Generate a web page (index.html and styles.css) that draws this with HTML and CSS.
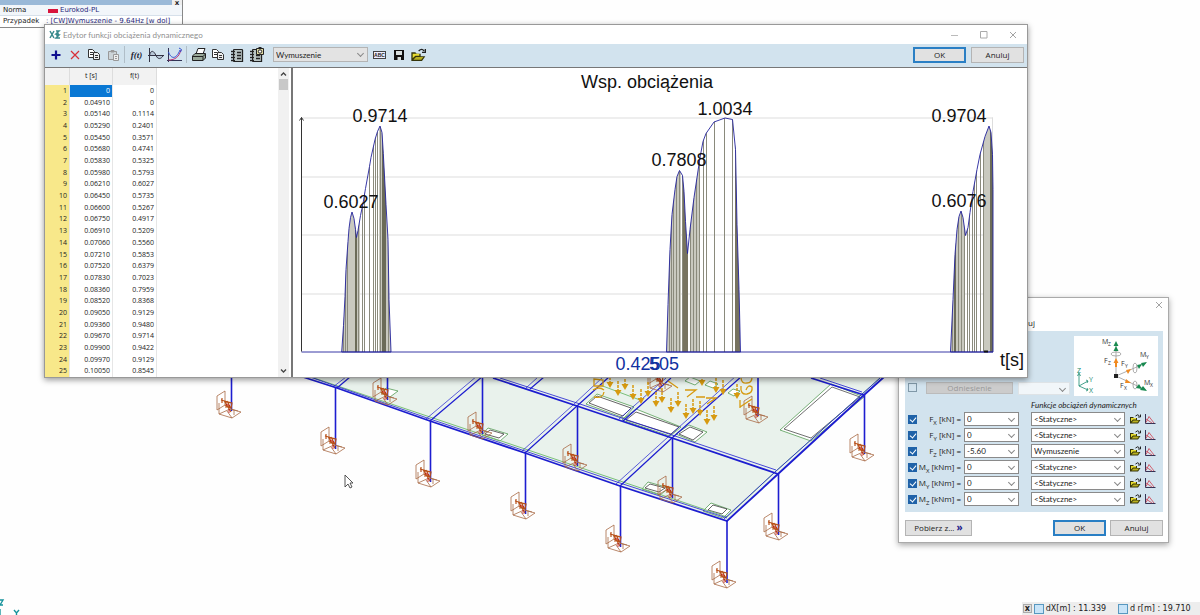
FILE: index.html
```html
<!DOCTYPE html>
<html lang="pl">
<head>
<meta charset="utf-8">
<title>Edytor funkcji obciążenia dynamicznego</title>
<link rel="stylesheet" href="styles.css">
</head>
<body>
<main class="desktop">
<svg class="scene" viewBox="0 0 1200 615" preserveAspectRatio="xMinYMin meet" aria-hidden="true">
  <defs>
    <g id="support" fill="none" stroke="#a86a45" stroke-width="0.8">
      <path d="M-14 -22 L-6 -27 V-13 L-14 -8 Z M-12 -15 V-4 L1 0 L10 -6 L-1 -9 L-12 -4 M1 0 L-4 -7 M3 -8 V-3 M0 -9 L7 -7"/>
      <path stroke="#b85018" stroke-width="1.2" d="M-10 -18 L1 -15 M-9 -20 V-15 M-6 -13 L0 -10 L1 -15 L-6 -16 L0 -6 M-4 -17 L-1 -11 L-6 -11"/>
      <path stroke="#c01010" stroke-width="0.8" d="M-5 -14 L-1 -12 M-2 -9 V-5"/>
    </g>
    <g id="arrow"><path fill="none" stroke="#d79a10" stroke-width="1.5" stroke-dasharray="3 1" d="M0 -11 V0"/><path fill="#d79a10" d="M-3.500 -2 H3.500 L0 4 Z"/></g>
  </defs>
  <path fill="#e9f2ec" d="M300 376 L430 421 L525 453 L620 486 L727 521 L778 474 L864 395 L886 376 Z"/>
  <g fill="#fff" stroke="#3f8f3f" stroke-width="0.7">
    <path d="M780 430 L811 441 L864 397 L831 384 Z"/><path stroke="#333" d="M784 429 L811 438 L860 397 L832 387 Z"/>
    <path d="M586 404 L597 394 L634 407 L624 418 Z"/><path stroke="#222" d="M589 403 L597 396 L631 408 L623 416 Z"/>
    <path d="M622 420 L636 409 L681 427 L670 436 Z"/><path stroke="#222" d="M626 420 L636 412 L679 427 L671 434 Z"/>
    <path d="M676 434 L689 425 L707 432 L695 442 Z"/><path stroke="#222" d="M679 434 L690 427 L703 432 L693 440 Z"/>
    <path d="M703 511 L711 503 L731 510 L723 518 Z"/><path stroke="#222" d="M708 510 L713 505 L727 509 L722 514 Z"/>
    <path d="M482 435 L488 428 L508 434 L500 441 Z"/><path stroke="#222" d="M485 434 L490 430 L504 434 L499 438 Z"/>
    <path d="M642 489 L648 482 L669 488 L660 495 Z"/><path stroke="#222" d="M645 488 L650 484 L665 488 L659 492 Z"/>
    <path d="M685 381 L690 377 L700 381 L695 385 Z M705 385 L710 381 L718 384 L713 388 Z M728 393 L733 389 L740 391 L734 396 Z M381 393 L386 388 L398 391 L390 397 Z"/>
  </g>
  <path fill="none" stroke="#6db96d" stroke-width="0.9" d="M314 378 L430 417 L727 517 L776 471 L880 378 M600 385 L640 400"/>
  <g fill="none" stroke="#1d1dd0">
    <path stroke-width="1.8" d="M303 377 L337 388 L430 421 L525 453 L620 486 L727 521 L778 474 L864 395 L884 377 M493 378 L577 406 L672 438 L778 474 M811 378 L864 395"/>
    <path stroke-width="0.8" d="M310 377 L430 419 L620 483 L727 518 M500 378 L577 403 L672 435 L776 470 M820 378 L862 392 M724 519 L775 472 L880 378"/>
    <path stroke-width="1.2" d="M337 388 L350 377 M430 421 L483 376 M525 453 L577 406 L609 377 M620 486 L672 438 L742 376 M530 389 L544 377 M623 421 L671 378"/>
    <path stroke-width="0.7" d="M333 387 L346 377 M426 419 L477 376 M521 452 L573 405 L603 377 M616 484 L668 437 L736 376 M526 388 L538 377 M619 419 L666 378"/>
    <path stroke-width="1.6" d="M231.500 377 V411 M335.500 388 V449 M387.500 377 V400 M430.500 421 V482 M482.500 377 V434 M525.500 453 V514 M577.500 406 V466 M620.500 486 V547 M672.500 438 V498 M727 521 V583 M758 377 V416 M778.500 474 V535 M864.500 395 V454"/>
  </g>
  <g>
    <use href="#support" x="231" y="418"/><use href="#support" x="335" y="454"/><use href="#support" x="387" y="405"/><use href="#support" x="430" y="487"/><use href="#support" x="482" y="439"/><use href="#support" x="525" y="519"/><use href="#support" x="577" y="471"/><use href="#support" x="620" y="552"/><use href="#support" x="672" y="503"/><use href="#support" x="726" y="588"/><use href="#support" x="758" y="423"/><use href="#support" x="778" y="540"/><use href="#support" x="864" y="461"/><use href="#support" x="662" y="392"/>
  </g>
  <g>
    <use href="#arrow" x="610" y="384"/><use href="#arrow" x="618" y="392"/><use href="#arrow" x="625" y="386"/><use href="#arrow" x="633" y="396"/><use href="#arrow" x="641" y="400"/><use href="#arrow" x="648" y="393"/><use href="#arrow" x="656" y="403"/><use href="#arrow" x="662" y="399"/><use href="#arrow" x="671" y="409"/><use href="#arrow" x="678" y="403"/><use href="#arrow" x="686" y="415"/><use href="#arrow" x="693" y="410"/><use href="#arrow" x="700" y="412"/><use href="#arrow" x="707" y="421"/><use href="#arrow" x="714" y="417"/><use href="#arrow" x="716" y="389"/><use href="#arrow" x="723" y="391"/><use href="#arrow" x="702" y="382"/><use href="#arrow" x="737" y="395"/>
    <path fill="none" stroke="#d79a10" stroke-width="1.3" d="M685 390 H696 L687 397 M696 397 H705 M706 398 H716 L707 404 M593 390 Q599 386 604 390 M594 397 Q603 399 604 392 M594 379 V386 H603 V380 Z M740 407 L752 399 M740 400 V408 M741 386 Q740 395 747 394 Q753 393 752 387 Q748 384 746 390 M741 377 Q741 384 747 383 Q752 383 752 377 M668 381 L678 388"/>
  </g>
  <path fill="#fff" stroke="#444" stroke-width="0.9" d="M345 475 V487 L348 484 L350 488 L352 487 L350 483 H353 Z"/>
  <path fill="none" stroke="#16939c" stroke-width="1.4" d="M0 600 H3 L0 605 H3 M0 609 V615 M14 610 L16.500 613 L19 610 M16.500 613 V615"/>
</svg>

<aside class="info">
  <div class="info-head"><button class="info-close" aria-label="Zamknij">x</button></div>
  <dl class="info-list">
    <div class="info-row"><dt>Norma</dt><dd><i class="flag"></i>Eurokod-PL</dd></div>
    <div class="info-row"><dt>Przypadek</dt><dd>: [CW]Wymuszenie - 9.64Hz [w dol]</dd></div>
  </dl>
</aside>

<section class="loads">
  <header class="loads-title"><button class="ghost" aria-label="Zamknij"><svg width="8" height="8" viewBox="0 0 8 8"><path d="M1 1 L7 7 M7 1 L1 7" stroke="#999" stroke-width="0.900" fill="none"/></svg></button></header>
  <div class="loads-tab">uj</div>
  <div class="loads-panel">
    <div class="ref-row">
      <input type="checkbox" class="tick" aria-label="Odniesienie">
      <button class="btn ref-btn" disabled>Odniesienie</button>
      <span class="combo muted"><select aria-label="Układ odniesienia" disabled><option></option></select></span>
      <svg class="axes" viewBox="0 0 84 60" aria-hidden="true">
        <rect width="84" height="60" fill="#fff"/>
        <g stroke="#999" fill="none" stroke-width="0.8"><path d="M42 40 V8 M42 40 L72 27 M42 40 L72 54"/><ellipse cx="42" cy="18" rx="5" ry="2"/><ellipse cx="61" cy="32" rx="2" ry="5"/><ellipse cx="61" cy="49" rx="2" ry="4"/></g>
        <g fill="#188a50"><path d="M39.500 10 L42 5 L44.500 10 Z M39.500 15 L42 10 L44.500 15 Z M67 27 L73 26 L69 31 Z M63 29 L68 28 L65 33 Z M66 54 L73 55 L69 50 Z M62 52 L68 53 L65 48 Z"/></g>
        <g fill="#f08a20"><path d="M39.500 27 L42 22 L44.500 27 Z M41 26 H43 V31 H41 Z M52 34 L57 33 L54 38 Z M52 43 L57 47 L51 47 Z"/></g>
        <rect x="40" y="38" width="4" height="4" fill="#222"/>
        <path d="M5 50 V38 M5 50 L14 45 M5 50 L14 54 M3.500 40 L5 37 L6.500 40 M12 44 L14 45 L13 47 M12 55 L14 54 L13 52" stroke="#188a70" fill="none" stroke-width="0.8"/>
        <g class="axes-text"><text x="28" y="8">M</text><text x="34" y="10">Z</text><text x="30" y="27">F</text><text x="34" y="29">Z</text><text x="47" y="30">F</text><text x="51" y="32">Y</text><text x="46" y="52">F</text><text x="50" y="54">X</text><text x="66" y="21">M</text><text x="72" y="23">Y</text><text x="70" y="49">M</text><text x="76" y="51">X</text></g>
        <g class="axes-world"><text x="3" y="37">Z</text><text x="15" y="46">Y</text><text x="15" y="57">X</text></g>
      </svg>
    </div>
    <p class="loads-caption">Funkcje obciążeń dynamicznych</p>
    <div class="load-grid">
      <div class="load-row"><input type="checkbox" class="tick" id="fx" checked><label for="fx">F<sub>X</sub> [kN] =</label><span class="combo"><select aria-label="Wartość FX"><option>0</option></select></span><span class="combo fn"><select aria-label="Funkcja FX"><option>&lt;Statyczne&gt;</option></select></span><button class="mini" aria-label="Otwórz"><svg><use href="#i-open"/></svg></button><button class="mini" aria-label="Wykres"><svg><use href="#i-graph"/></svg></button></div>
      <div class="load-row"><input type="checkbox" class="tick" id="fy" checked><label for="fy">F<sub>Y</sub> [kN] =</label><span class="combo"><select aria-label="Wartość FY"><option>0</option></select></span><span class="combo fn"><select aria-label="Funkcja FY"><option>&lt;Statyczne&gt;</option></select></span><button class="mini" aria-label="Otwórz"><svg><use href="#i-open"/></svg></button><button class="mini" aria-label="Wykres"><svg><use href="#i-graph"/></svg></button></div>
      <div class="load-row"><input type="checkbox" class="tick" id="fz" checked><label for="fz">F<sub>Z</sub> [kN] =</label><span class="combo"><select aria-label="Wartość FZ"><option>-5.60</option></select></span><span class="combo fn"><select aria-label="Funkcja FZ"><option>Wymuszenie</option></select></span><button class="mini" aria-label="Otwórz"><svg><use href="#i-open"/></svg></button><button class="mini" aria-label="Wykres"><svg><use href="#i-graph"/></svg></button></div>
      <div class="load-row"><input type="checkbox" class="tick" id="mx" checked><label for="mx">M<sub>X</sub> [kNm] =</label><span class="combo"><select aria-label="Wartość MX"><option>0</option></select></span><span class="combo fn"><select aria-label="Funkcja MX"><option>&lt;Statyczne&gt;</option></select></span><button class="mini" aria-label="Otwórz"><svg><use href="#i-open"/></svg></button><button class="mini" aria-label="Wykres"><svg><use href="#i-graph"/></svg></button></div>
      <div class="load-row"><input type="checkbox" class="tick" id="my" checked><label for="my">M<sub>Y</sub> [kNm] =</label><span class="combo"><select aria-label="Wartość MY"><option>0</option></select></span><span class="combo fn"><select aria-label="Funkcja MY"><option>&lt;Statyczne&gt;</option></select></span><button class="mini" aria-label="Otwórz"><svg><use href="#i-open"/></svg></button><button class="mini" aria-label="Wykres"><svg><use href="#i-graph"/></svg></button></div>
      <div class="load-row"><input type="checkbox" class="tick" id="mz" checked><label for="mz">M<sub>Z</sub> [kNm] =</label><span class="combo"><select aria-label="Wartość MZ"><option>0</option></select></span><span class="combo fn"><select aria-label="Funkcja MZ"><option>&lt;Statyczne&gt;</option></select></span><button class="mini" aria-label="Otwórz"><svg><use href="#i-open"/></svg></button><button class="mini" aria-label="Wykres"><svg><use href="#i-graph"/></svg></button></div>
    </div>
  </div>
  <footer class="loads-foot"><button class="btn wide">Pobierz z... <b>»</b></button><span class="grow"></span><button class="btn primary">OK</button><button class="btn">Anuluj</button></footer>
</section>

<section class="editor">
  <header class="titlebar">
    <svg width="12" height="10" viewBox="0 0 12 10" aria-hidden="true"><path d="M1 1 L5 8 M5 1 L1 8 M7 1 H10 L7 4 H10 M7 5 H10 L7 8 H11" stroke="#37898c" stroke-width="1.500" fill="none"/></svg>
    <h1>Edytor funkcji obciążenia dynamicznego</h1>
    <span class="grow"></span>
    <button class="ghost" aria-label="Minimalizuj"><svg width="8" height="8" viewBox="0 0 8 8"><path d="M0 4.500 H7" stroke="#bbb"/></svg></button>
    <button class="ghost" aria-label="Maksymalizuj"><svg width="8" height="8" viewBox="0 0 8 8"><path d="M.5 .5 H7 V7 H.5 Z" stroke="#aaa" fill="none"/></svg></button>
    <button class="ghost" aria-label="Zamknij"><svg width="8" height="8" viewBox="0 0 8 8"><path d="M1 1 L7 7 M7 1 L1 7" stroke="#999" stroke-width="0.900" fill="none"/></svg></button>
  </header>
  <div class="toolbar">
    <div class="tools">
      <button aria-label="Dodaj"><svg viewBox="0 0 16 16"><path d="M8 3.500 V12.500 M3.500 8 H12.500" stroke="#101090" stroke-width="2.200"/></svg></button>
      <button aria-label="Usuń"><svg viewBox="0 0 16 16"><path d="M4 4 L12 12 M12 4 L4 12" stroke="#d83038" stroke-width="1.200"/></svg></button>
      <button aria-label="Kopiuj"><svg viewBox="0 0 16 16"><use href="#i-copy"/></svg></button>
      <button aria-label="Wklej"><svg viewBox="0 0 16 16"><path d="M3.500 4.500 H11.500 V12.500 H3.500 Z M6 3.500 H9 V5 H6 Z" fill="#ccd4d8" stroke="#999"/><path d="M8.500 7.500 H13.500 V13.500 H8.500 Z M10 9.500 H12 M10 11.500 H12" fill="#eee" stroke="#999"/></svg></button>
    </div>
    <div class="tools">
      <button class="formula" aria-label="Wzór">f(t)</button>
      <button aria-label="Sinus"><svg viewBox="0 0 16 16"><path d="M1.500 1 V15 M0 8.500 H16 M1.500 8.500 C3 2 6 4 8 8.500 S13 12 15 9" fill="#b8c8d8" stroke="#334" /></svg></button>
      <button aria-label="Krzywa"><svg viewBox="0 0 16 16"><path d="M1.500 1 V15 M0 13.500 H15" stroke="#335" /><path d="M1.500 13 C8 13 12 10 14 3" fill="none" stroke="#c03070"/><path d="M1.500 5 C4 12 9 13 13 3 M12 1 L14.500 2.500 L13.500 5" fill="none" stroke="#3050d0"/></svg></button>
    </div>
    <div class="tools">
      <button aria-label="Drukuj"><svg viewBox="0 0 16 16"><path d="M5 7 L7 1.500 H14 L12 7 Z" fill="#fff" stroke="#222"/><path d="M1.500 9 L4 6.500 H14.500 V11 L12 13.500 H1.500 Z M1.500 9.500 H12 V13.500 M12 9.500 L14.500 7" fill="#98a898" stroke="#222"/></svg></button>
      <button aria-label="Kopiuj obraz"><svg viewBox="0 0 16 16"><use href="#i-copy"/></svg></button>
      <button aria-label="Raport"><svg viewBox="0 0 16 16"><use href="#i-book"/></svg></button>
      <button aria-label="Zrzut do raportu"><svg viewBox="0 0 16 16"><use href="#i-book"/><path d="M8.500 1.500 H15.500 V7.500 H8.500 Z M10.500 .5 H13.500" fill="#ddd8a0" stroke="#222"/><circle cx="12" cy="4.500" r="1.700" fill="#fff" stroke="#222"/></svg></button>
    </div>
    <span class="combo preset"><select aria-label="Funkcja"><option>Wymuszenie</option></select></span>
    <div class="tools file-tools">
      <button class="abc" aria-label="Nazwa"><span>ABC</span></button>
      <button aria-label="Zapisz"><svg viewBox="0 0 16 16"><path d="M3 3 H13 V13 H3 Z" fill="#111"/><path d="M5 4 H11 V8 H5 Z M6.500 10 H10 V13 H6.500 Z" fill="#d8e0e0"/></svg></button>
      <button aria-label="Otwórz"><svg viewBox="0 0 12 12"><use href="#i-open-shape"/></svg></button>
    </div>
    <span class="grow"></span>
    <button class="btn primary">OK</button><button class="btn">Anuluj</button>
  </div>
  <div class="content">
    <div class="sheet">
      <table>
        <thead><tr><th></th><th>t [s]</th><th>f(t)</th></tr></thead>
        <tbody>
<tr><th>1</th><td class="sel">0</td><td>0</td></tr>
<tr><th>2</th><td>0.04910</td><td>0</td></tr>
<tr><th>3</th><td>0.05140</td><td>0.1114</td></tr>
<tr><th>4</th><td>0.05290</td><td>0.2401</td></tr>
<tr><th>5</th><td>0.05450</td><td>0.3571</td></tr>
<tr><th>6</th><td>0.05680</td><td>0.4741</td></tr>
<tr><th>7</th><td>0.05830</td><td>0.5325</td></tr>
<tr><th>8</th><td>0.05980</td><td>0.5793</td></tr>
<tr><th>9</th><td>0.06210</td><td>0.6027</td></tr>
<tr><th>10</th><td>0.06450</td><td>0.5735</td></tr>
<tr><th>11</th><td>0.06600</td><td>0.5267</td></tr>
<tr><th>12</th><td>0.06750</td><td>0.4917</td></tr>
<tr><th>13</th><td>0.06910</td><td>0.5209</td></tr>
<tr><th>14</th><td>0.07060</td><td>0.5560</td></tr>
<tr><th>15</th><td>0.07210</td><td>0.5853</td></tr>
<tr><th>16</th><td>0.07520</td><td>0.6379</td></tr>
<tr><th>17</th><td>0.07830</td><td>0.7023</td></tr>
<tr><th>18</th><td>0.08360</td><td>0.7959</td></tr>
<tr><th>19</th><td>0.08520</td><td>0.8368</td></tr>
<tr><th>20</th><td>0.09050</td><td>0.9129</td></tr>
<tr><th>21</th><td>0.09360</td><td>0.9480</td></tr>
<tr><th>22</th><td>0.09670</td><td>0.9714</td></tr>
<tr><th>23</th><td>0.09900</td><td>0.9422</td></tr>
<tr><th>24</th><td>0.09970</td><td>0.9129</td></tr>
<tr><th>25</th><td>0.10050</td><td>0.8545</td></tr>
        </tbody>
      </table>
      <div class="scroll"><svg width="7" height="6" viewBox="0 0 7 6"><path d="M1 4.500 L3.500 2 L6 4.500" fill="none" stroke="#444" stroke-width="1.300"/></svg><i class="thumb"></i><span class="grow"></span><svg width="7" height="6" viewBox="0 0 7 6"><path d="M1 1.500 L3.500 4 L6 1.500" fill="none" stroke="#444" stroke-width="1.300"/></svg></div>
    </div>
    <svg class="chart" viewBox="293 69 734 308" role="img" aria-label="Wsp. obciążenia">
      <defs>
        <path id="p1" d="M341.700 352.500 L343.500 326 L345 297 L346 270 L348 242 L349 229 L350.500 218 L352 212.500 L354 219 L355.500 230 L356.500 238 L358 231 L360.500 216 L363 204 L365.500 189 L369.500 167 L371 158 L375 140 L377.500 132 L380 126.500 L382 133 L383.300 154 L386 205 L388 240 L389 300 L391 352.500 Z"/>
        <path id="p2" d="M666.500 352.500 L668 305 L670 250 L672 215 L675 190 L677 177 L679.500 171 L682.500 176 L684 192 L685.500 222 L687.500 254 L690 230 L694 198 L700 158 L703 142 L706 134 L714 122.500 L725 118.500 L732.500 120 L735.500 150 L737 225 L739 290 L740.500 352.500 Z"/>
        <path id="p3" d="M950.500 352.500 L953 300 L955 255 L957 230 L959 217 L961 211.500 L963 218 L965.500 236 L968 228 L970 213 L973 192 L977 170 L980 155 L985 137 L989 126.500 L991 133 L992.500 155 L993 190 V352.500 Z"/>
        <clipPath id="c1"><use href="#p1"/></clipPath><clipPath id="c2"><use href="#p2"/></clipPath><clipPath id="c3"><use href="#p3"/></clipPath>
      </defs>
      <path class="guides" d="M302 118.500 H993 M302 177.500 H993 M302 235.500 H993 M302 294.500 H993 M992.500 118 V190"/>
      <g clip-path="url(#c1)"><path fill="#c9c9bf" d="M341 118 H360 V353 H341 Z M379 118 H392 V353 H379 Z"/><path fill="#6b6b58" d="M382 118 H386 V353 H382 Z M355 118 H357 V353 H355 Z"/><path class="hatch" d="M343.500 353 V118 M345.500 353 V118 M347.500 353 V118 M358.500 353 V118 M362.500 353 V118 M364.500 353 V118 M369.500 353 V118 M373.500 353 V118 M375.500 353 V118 M377.500 353 V118 M380.500 353 V118 M388.500 353 V118"/></g>
      <g clip-path="url(#c2)"><path fill="#c9c9bf" d="M666 118 H681 V353 H666 Z M690 118 H700 V353 H690 Z"/><path fill="#77735f" d="M683 118 H688 V353 H683 Z M735 118 H740 V353 H735 Z"/><path class="hatch" d="M669.500 353 V118 M671.500 353 V118 M673.500 353 V118 M676.500 353 V118 M679.500 353 V118 M682.500 353 V118 M690.500 353 V118 M693.500 353 V118 M696.500 353 V118 M699.500 353 V118 M703.500 353 V118 M706.500 353 V118 M714.500 353 V118 M724.500 353 V118 M732.500 353 V118"/></g>
      <g clip-path="url(#c3)"><path fill="#c9c9bf" d="M950 118 H965 V353 H950 Z M983 118 H990 V353 H983 Z"/><path fill="#6b6b58" d="M990 118 H993 V353 H990 Z M954 118 H956 V353 H954 Z"/><path class="hatch" d="M952.500 353 V118 M958.500 353 V118 M961.500 353 V118 M964.500 353 V118 M967.500 353 V118 M969.500 353 V118 M972.500 353 V118 M974.500 353 V118 M976.500 353 V118 M980.500 353 V118 M983.500 353 V118"/></g>
      <g fill="none" stroke="#22229c" stroke-width="0.900"><use href="#p1"/><use href="#p2"/><use href="#p3"/><path d="M301.500 352.500 H993"/></g>
      <path fill="none" stroke="#333" d="M301.500 352 V118 M299.500 121 L301.500 118 L303.500 121"/><path d="M984 352 H988" stroke="#111" stroke-width="2"/>
      <g class="chart-text"><text x="647" y="88">Wsp. obciążenia</text><text x="380" y="122">0.9714</text><text x="351" y="208">0.6027</text><text x="725" y="115">1.0034</text><text x="679" y="166">0.7808</text><text x="959" y="122">0.9704</text><text x="959" y="207">0.6076</text><text x="1012" y="366">t[s]</text><text class="time" x="638" y="370">0.425</text><text class="time" x="664" y="370">505</text></g>
    </svg>
  </div>
</section>

<footer class="status"><button aria-label="Zamknij">x</button><span><i></i>dX[m] : 11.339</span><span><i></i>d r[m] : 19.710</span></footer>
</main>
<svg class="sprite" aria-hidden="true">
  <symbol id="i-open" viewBox="0 0 12 12"><g id="i-open-shape"><path d="M1 10 V4 H4 L5 5 H8 V7 H11.500 L9 10.500 H1 Z" fill="#35350a"/><path d="M2 8.500 V5 H7 V6.500 H4 Z" fill="#e8dd30"/><path d="M2.500 9.500 L4.500 7.500 H10 L8.500 9.500 Z" fill="#b8b020"/><path d="M6.500 3 Q9 .5 10.500 3 M11.500 1.500 V4 H9" fill="none" stroke="#222"/></g></symbol>
  <symbol id="i-graph" viewBox="0 0 12 12"><path d="M1.500 1 V10.500 H11.500" fill="none" stroke="#335"/><path d="M2 9.500 L5 3.500 L10 10 M2 6 L5 8 L8 10" fill="none" stroke="#d05060" stroke-width="0.900"/></symbol>
  <symbol id="i-copy" viewBox="0 0 16 16"><path d="M2.500 2.500 H6.500 L8.500 4.500 V10.500 H2.500 Z M4 5.500 H7 M4 7.500 H7" fill="#fff" stroke="#333"/><path d="M7.500 5.500 H11.500 L13.500 7.500 V12.500 H7.500 Z M9 8.500 H12 M9 10.500 H12" fill="#eee" stroke="#333"/></symbol>
  <symbol id="i-book" viewBox="0 0 16 16"><path d="M4.500 2.500 H13.500 V14.500 H4.500 Z" fill="#b8c4c4" stroke="#222"/><path d="M2 4.500 H6 M2 7.500 H6 M2 10.500 H6 M2 13.500 H6 M8 5.500 H12 M8 8.500 H12 M8 11.500 H12 M13.500 3 V15" stroke="#222" stroke-width="1.300"/></symbol>
</svg>
</body>
</html>
```
FILE: styles.css
```css
* { box-sizing: border-box; }
body { margin: 0; background: #fefefe; color: #222; font: 7px/10px "Open Sans", "Noto Sans", sans-serif; }
button, select, input { font: inherit; color: inherit; margin: 0; padding: 0; }
button { border: 0; background: none; }
.grow { flex: 1; }
.sprite { position: absolute; width: 0; height: 0; }
.desktop { position: relative; min-height: 100vh; overflow: hidden; }
.scene { display: block; width: 100%; }

/* case information box */
.info { position: absolute; left: 0; top: 0; width: 183px; font-family: "DejaVu Sans", sans-serif; background: #f2f6fa; border: solid #888; border-width: 0 1px 1px 0; }
.info-head { display: flex; justify-content: flex-end; height: 5px; background: #9ab9d8; overflow: hidden; }
.info-close { width: 10px; line-height: 4px; font-weight: bold; background: #eee; }
.info-list { margin: 0; }
.info-row { display: flex; height: 11px; padding-left: 3px; border-bottom: 1px solid #d6e0ea; white-space: nowrap; }
.info-row:last-child { background: #fff; border: 0; }
.info-row dt { width: 43px; }
.info-row dd { margin: 0; color: #29297c; }
.flag { display: inline-block; width: 10px; height: 4px; margin: 0 2px 0 2px; vertical-align: -1px; background: #d8143c; }

/* shared controls */
.ghost { display: flex; }
.btn { width: 53px; height: 16px; border: 1px solid #b4b4b4; background: #e1e1e1; font-size: 8px; }
.btn.primary { border: 2px solid #2a7fc4; }
.btn:disabled { color: #999; border-color: #bbb; background: #ccc; }
.combo { position: relative; display: block; height: 15px; }
.combo select { display: block; width: 100%; height: 100%; padding: 0 12px 0 2px; appearance: none; border: 1px solid #8a8a8a; border-radius: 0; background: #fff; color: #222; font-family: Lato, "Open Sans", sans-serif; font-size: 8px; }
.combo::after { content: ""; position: absolute; right: 5px; top: 4px; width: 4px; height: 4px; border: solid #888; border-width: 0 1px 1px 0; transform: rotate(45deg); }
.combo.muted select { border-color: #e4e4e4; }
.tick { position: relative; width: 9px; height: 9px; appearance: none; border: 1px solid #8098a8; }
.tick:checked { border-color: #1f62a8; background: #1f62a8; }
.tick:checked::after { content: ""; position: absolute; left: 2px; top: 0; width: 3px; height: 5px; border: solid #fff; border-width: 0 1px 1px 0; transform: rotate(40deg); }

/* function editor window */
.editor { position: absolute; left: 44px; top: 24px; width: 82%; background: #fff; border: 1px solid #999; box-shadow: 0 2px 6px rgba(0, 0, 0, .4); }
.titlebar { display: flex; align-items: center; gap: 2px; height: 19px; padding: 0 10px 0 4px; }
.titlebar h1 { margin: 0; font-family: Lato, "Open Sans", sans-serif; font-size: 8px; font-weight: 400; color: #8f8f8f; }
.titlebar .ghost { margin-left: 19px; }
.toolbar { display: flex; align-items: center; height: 23px; padding: 0 3px 2px 1px; background: #d2e3ee; }
.toolbar > .btn + .btn { margin-left: 5px; }
.tools { display: flex; }
.tools + .tools { margin-left: 2px; padding-left: 2px; border-left: 1px solid #b0bec8; }
.tools button { display: flex; align-items: center; justify-content: center; width: 19px; height: 17px; }
.tools svg { width: 16px; height: 16px; }
.tools .formula { font: italic bold 9px/16px "Liberation Serif", serif; color: #223; }
.abc span { border: 1px solid #444; font: bold 5px/6px "Liberation Sans", sans-serif; background: #eef; }
.preset { width: 95px; margin: 0 2px 0 8px; }
.preset select { border-color: #b4b4b4; background: #e3e3e3; }
.content { display: flex; border-top: 1px solid #777; }
.sheet { display: flex; justify-content: space-between; width: 248px; flex: none; border-right: 2px solid #777; }
table { display: block; border-collapse: collapse; }
tr { display: grid; grid-template-columns: 25px 43px 44px; }
thead tr { height: 17px; }
thead th { padding: 3px 0 0; font-weight: 400; line-height: 9px; text-align: center; background: #f2f2f2; border-right: 1px solid #ddd; }
tbody { display: grid; grid-template-rows: repeat(25, minmax(0, 1fr)); height: 292px; }
tbody td, tbody th { padding: 0 2px; font-weight: 400; line-height: 11px; text-align: right; border-right: 1px solid #e6e6e6; }
tbody th { background: #f8e88a; }
tbody .sel { background: #0a78d4; color: #fff; }
.scroll { display: flex; flex-direction: column; align-items: center; width: 11px; margin-right: 2px; padding: 3px 0; background: #f1f1f1; }
.thumb { width: 9px; height: 11px; margin-top: 2px; background: #c8c8c8; }
.chart { display: block; flex: 1; min-width: 0; }
.guides { fill: none; stroke: #ddd; }
.hatch { fill: none; stroke: #8a8a7c; stroke-width: 1px; }
.chart-text { font: 18px "Liberation Sans", Arial, sans-serif; text-anchor: middle; fill: #111; }
.time { fill: #1030a0; }

/* nodal load window */
.loads { position: absolute; right: 31px; top: 297px; width: 271px; padding: 0 5px 6px 6px; background: #fff; border: 1px solid #aaa; box-shadow: 0 2px 6px rgba(0, 0, 0, .35); font-size: 8px; }
.loads-title { display: flex; justify-content: flex-end; padding-top: 3px; height: 20px; }
.loads-tab { height: 13px; padding-left: 123px; }
.loads-panel { padding: 5px 5px 6px 3px; background: #d2e3ee; }
.ref-row { display: flex; align-items: flex-end; }
.ref-row .tick { margin: 0 9px 4px 0; }
.ref-row .ref-btn { width: 87px; height: 12px; margin: 0 5px 2px 0; }
.ref-row .combo { width: 52px; height: 13px; margin: 0 4px 1px 0; }
.axes { width: 84px; height: 60px; margin-left: auto; }
.axes-text, .axes-world { font: 7px "Open Sans", sans-serif; fill: #333; }
.axes-text text:nth-of-type(even) { font-size: 5px; }
.axes-world { fill: #188a70; }
.loads-caption { margin: 4px 0 2px 123px; font-family: Lato, "Open Sans", sans-serif; font-style: italic; }
.load-grid { display: grid; gap: 2px; }
.load-row { display: grid; grid-template-columns: 9px 41px 55px 94px 12px 12px; column-gap: 3px; align-items: center; height: 14px; }
.load-row .combo { height: 14px; }
.load-row label { justify-self: end; white-space: nowrap; line-height: 10px; }
.load-row .fn { margin-left: 9px; width: 94px; }
.load-row .mini { margin-left: 10px; }
.load-row sub { font-size: 6px; line-height: 0; }
.mini { width: 12px; height: 12px; }
.mini svg { display: block; width: 12px; height: 12px; }
.loads-foot { display: flex; gap: 4px; padding-top: 8px; }
.loads-foot .wide { width: 67px; }
.loads-foot b { color: #22228c; font-size: 10px; line-height: 8px; }

/* coordinate readout */
.status { position: absolute; right: 0; bottom: 0; display: flex; align-items: center; width: 178px; height: 13px; gap: 2px; background: #ededed; font-family: "DejaVu Sans", sans-serif; font-size: 8px; white-space: nowrap; }
.status button { width: 9px; height: 9px; line-height: 7px; font-weight: bold; background: #ddd; border: 1px solid #aaa; margin-left: 1px; }
.status span { display: flex; align-items: center; width: 85px; gap: 2px; }
.status i { width: 10px; height: 10px; background: #c8e4f8; border: 1px solid #5898c0; }
```
